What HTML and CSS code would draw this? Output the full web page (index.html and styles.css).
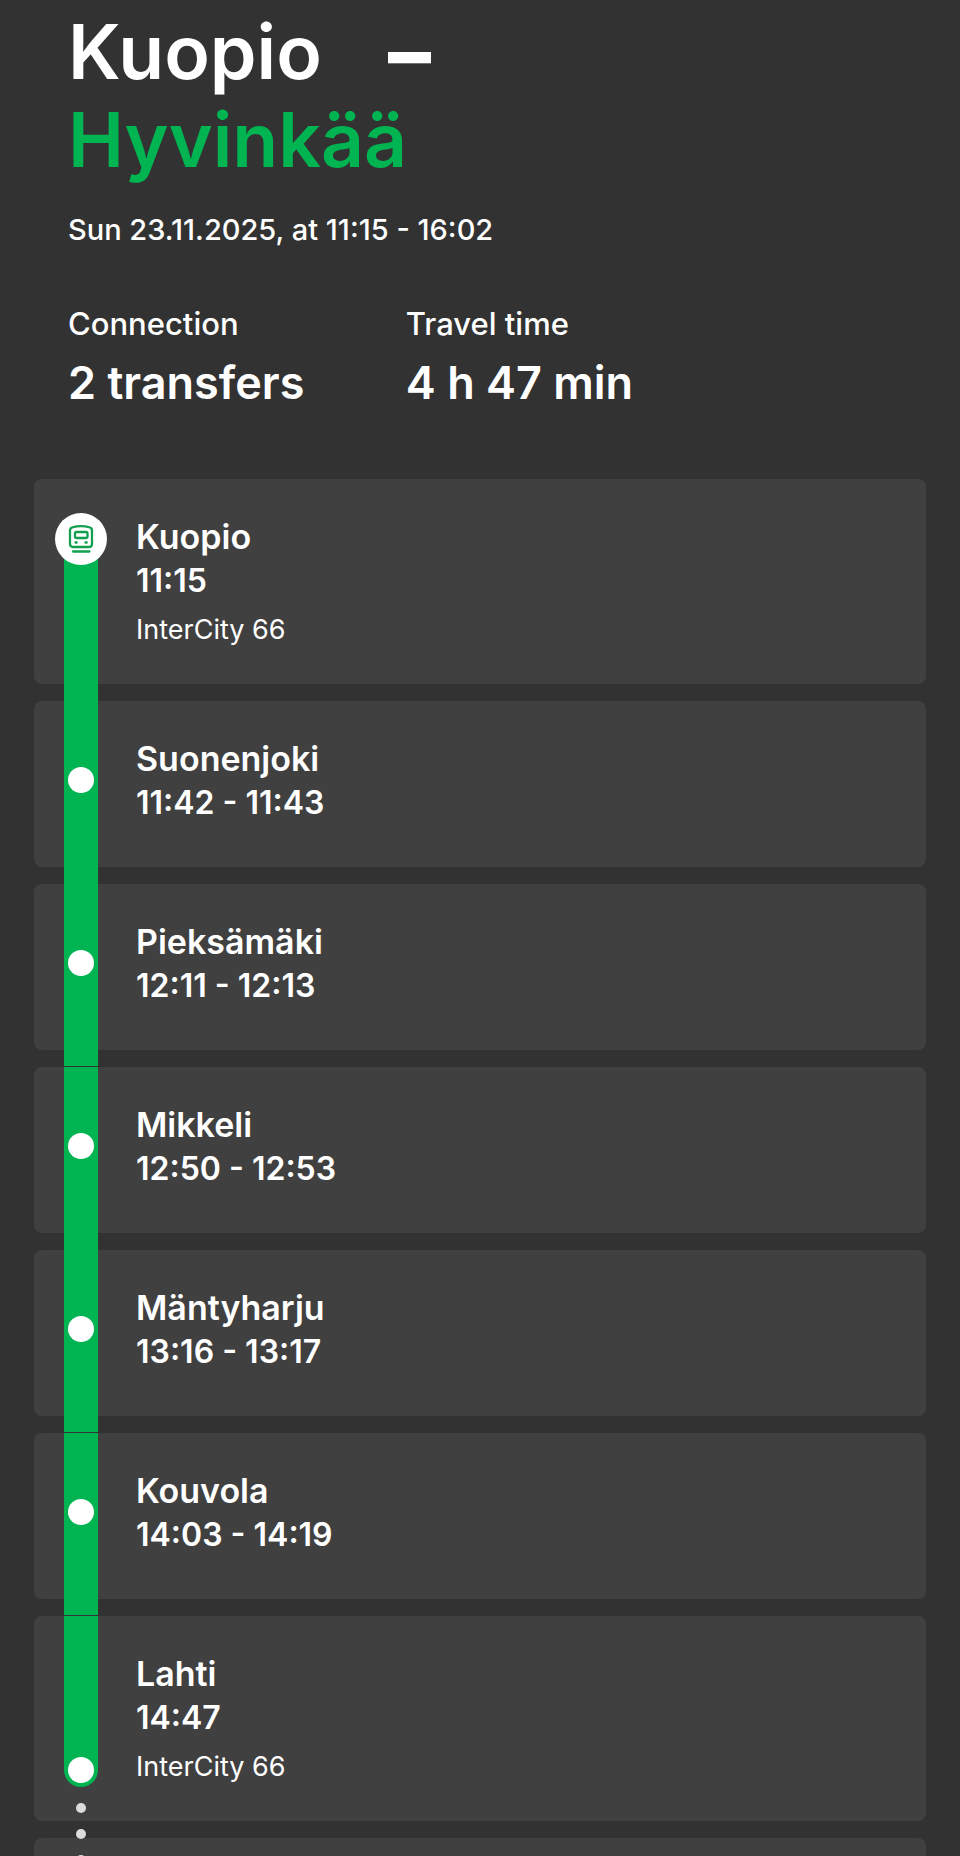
FILE: index.html
```html
<!DOCTYPE html>
<html lang="en">
<head>
    <meta charset="UTF-8">
    <meta name="viewport" content="width=device-width, initial-scale=1.0">
    <title>Kuopio - Hyvinkää</title>
    <link rel="stylesheet" href="styles.css">
</head>
<body>
    <header class="trip">
        <h1 class="route">
            <span class="from">Kuopio <span class="dash">–</span></span>
            <span class="to">Hyvinkää</span>
        </h1>
        <p class="date">Sun 23.11.2025, at 11:15 - 16:02</p>
        <dl class="facts">
            <div class="fact">
                <dt>Connection</dt>
                <dd>2 transfers</dd>
            </div>
            <div class="fact">
                <dt>Travel time</dt>
                <dd>4 h 47 min</dd>
            </div>
        </dl>
    </header>

    <ol class="stops">
        <li class="stop first">
            <div class="track">
                <div class="line"></div>
                <div class="badge">
                    <svg width="28" height="30" viewBox="0 0 28 30" fill="none" stroke="#12a04f" stroke-width="2.3" stroke-linecap="round" stroke-linejoin="round" aria-hidden="true">
                        <path d="M5 3.500C10 2 18 2 23 3.500Q25 4.200 25 6.500V20Q25 23 22 23H6Q3 23 3 20V6.500Q3 4.200 5 3.500Z"/>
                        <rect x="8" y="8" width="12.500" height="6" rx="1.500"/>
                        <path d="M8.500 18.500h1.200M18.500 18.500h1.200"/>
                        <path d="M6 27.500h16.500"/>
                    </svg>
                </div>
            </div>
            <div class="info">
                <h2>Kuopio</h2>
                <p class="time">11:15</p>
                <p class="train">InterCity 66</p>
            </div>
        </li>
        <li class="stop">
            <div class="track"><div class="line"></div><div class="dot"></div></div>
            <div class="info">
                <h2>Suonenjoki</h2>
                <p class="time">11:42 - 11:43</p>
            </div>
        </li>
        <li class="stop seam">
            <div class="track"><div class="line"></div><div class="dot"></div></div>
            <div class="info">
                <h2>Pieksämäki</h2>
                <p class="time">12:11 - 12:13</p>
            </div>
        </li>
        <li class="stop">
            <div class="track"><div class="line"></div><div class="dot"></div></div>
            <div class="info">
                <h2>Mikkeli</h2>
                <p class="time">12:50 - 12:53</p>
            </div>
        </li>
        <li class="stop seam">
            <div class="track"><div class="line"></div><div class="dot"></div></div>
            <div class="info">
                <h2>Mäntyharju</h2>
                <p class="time">13:16 - 13:17</p>
            </div>
        </li>
        <li class="stop seam">
            <div class="track"><div class="line"></div><div class="dot"></div></div>
            <div class="info">
                <h2>Kouvola</h2>
                <p class="time">14:03 - 14:19</p>
            </div>
        </li>
        <li class="stop last">
            <div class="track">
                <div class="line"></div>
                <div class="dot"></div>
                <div class="wait"><i></i><i></i><i></i></div>
            </div>
            <div class="info">
                <h2>Lahti</h2>
                <p class="time">14:47</p>
                <p class="train">InterCity 66</p>
            </div>
        </li>
        <li class="stop next"></li>
    </ol>
</body>
</html>
```
FILE: styles.css
```css
body {
    background-color: #323232;
    color: white;
    font-family: Inter, "Liberation Sans", sans-serif;
    display: flex;
    flex-direction: column;
    min-height: 100vh;
    margin: 0;
    overflow: hidden;
}

h1, h2, p, dl, dd, ol {
    margin: 0;
    padding: 0;
}

.trip {
    padding: 8px 68px 64px;
}

.route {
    font-size: 75px;
    font-weight: 600;
    line-height: 88px;
}

.route .from {
    display: flex;
    gap: 66px;
}

.route .to {
    display: block;
    color: #00b451;
}

.dash {
    font-size: 86px;
    font-weight: 800;
}

.date {
    margin-top: 26px;
    font-size: 29px;
    font-weight: 500;
    line-height: 40px;
}

.facts {
    display: flex;
    margin-top: 54px;
}

.fact {
    width: 41%;
}

.fact dt {
    font-size: 31px;
    font-weight: 500;
    line-height: 40px;
}

.fact dd {
    margin-top: 7px;
    font-size: 45px;
    font-weight: 600;
    line-height: 64px;
}

.stops {
    display: flex;
    flex: 1;
    flex-direction: column;
    gap: 17px;
    margin: 0 34px;
    list-style: none;
}

.stop {
    display: flex;
    gap: 38px;
    min-height: 166px;
    padding-left: 30px;
    background-color: #404040;
    border-radius: 8px;
}

/* the green line runs on over the gap to the next card */
.track {
    position: relative;
    display: flex;
    flex-direction: column;
    align-items: center;
    width: 34px;
    margin-bottom: -17px;
}

.seam .track {
    margin-bottom: -16px;
}

.line {
    flex: 1;
    width: 34px;
    background-color: #00b451;
}

.dot {
    position: absolute;
    top: 66px;
    width: 26px;
    height: 26px;
    background-color: white;
    border-radius: 50%;
}

.badge {
    position: absolute;
    top: 34px;
    display: flex;
    align-items: center;
    justify-content: center;
    width: 52px;
    height: 52px;
    background-color: white;
    border-radius: 50%;
}

.first .line {
    margin-top: 60px;
}

.last .track {
    margin-bottom: 34px;
}

.last .line {
    border-radius: 0 0 17px 17px;
}

.last .dot {
    top: auto;
    bottom: 4px;
}

.wait {
    position: absolute;
    top: calc(100% + 16px);
    display: flex;
    flex-direction: column;
    gap: 16px;
}

.wait i {
    width: 10px;
    height: 10px;
    background-color: #dcdcdc;
    border-radius: 50%;
}

.info {
    padding: 36px 0;
}

.info h2 {
    font-size: 34px;
    font-weight: 600;
    line-height: 44px;
}

.time {
    font-size: 32px;
    font-weight: 600;
    line-height: 44px;
}

.train {
    padding-top: 9px;
    font-size: 27px;
    line-height: 36px;
}

.next {
    flex: 1;
    min-height: 0;
    border-radius: 8px 8px 0 0;
}
```
